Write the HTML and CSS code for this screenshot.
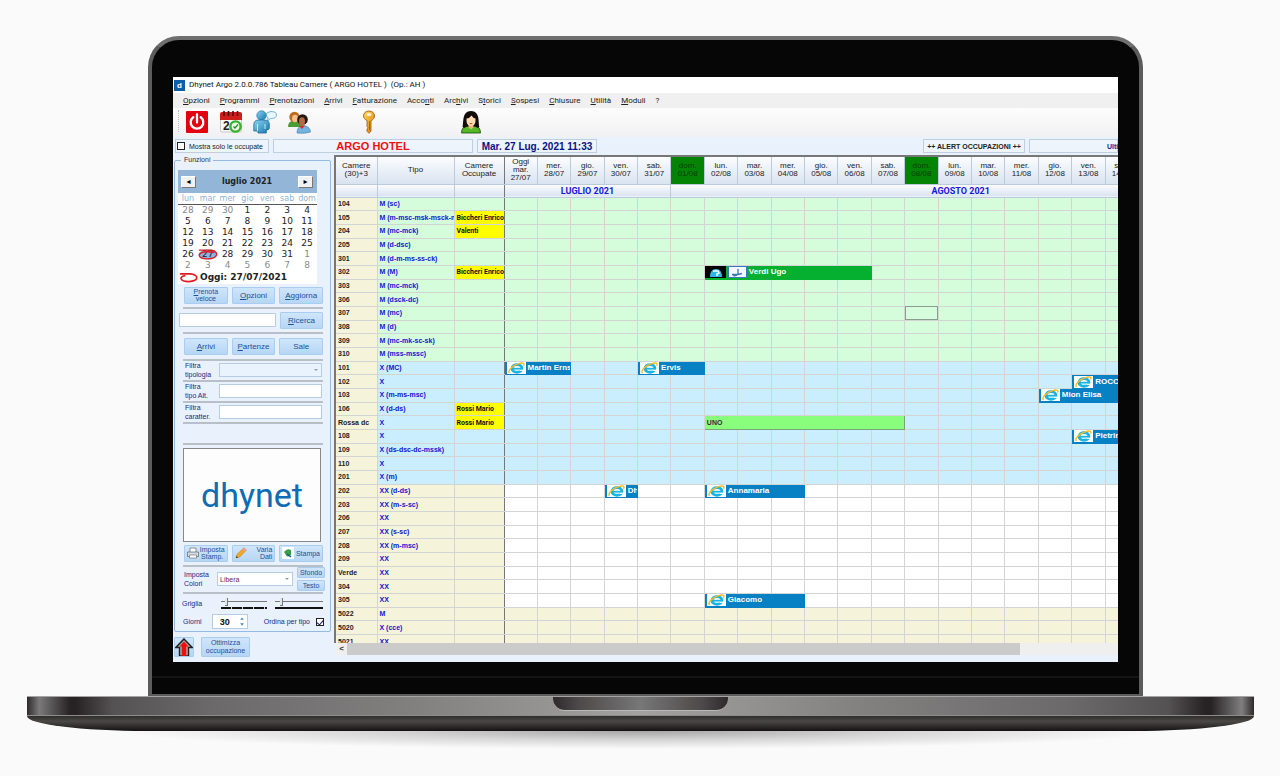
FILE: index.html
```html
<!DOCTYPE html>
<html lang="it">
<head>
<meta charset="utf-8">
<meta name="viewport" content="width=device-width, initial-scale=1">
<title>Dhynet Argo - Tableau Camere</title>
<link rel="stylesheet" href="styles.css">
</head>
<body>
<svg class="defs" aria-hidden="true">
  <defs>
    <linearGradient id="skyBody" x1="0" y1="0" x2="1" y2="1"><stop offset="0" stop-color="#8fd4f4"/><stop offset="1" stop-color="#1277ae"/></linearGradient>
    <linearGradient id="gold" x1="0" y1="0" x2="1" y2="1"><stop offset="0" stop-color="#ffd95a"/><stop offset="1" stop-color="#d9780e"/></linearGradient>
    <symbol id="ie" viewBox="0 0 19 12" preserveAspectRatio="none">
      <rect width="19" height="12" fill="#fff"/>
      <ellipse cx="10" cy="6.4" rx="4.9" ry="3.8" fill="none" stroke="#19b4e2" stroke-width="2.900"/>
      <path d="M6 6.7h9" stroke="#19b4e2" stroke-width="1.8"/>
      <path d="M12.5 8.3h4" stroke="#fff" stroke-width="1.3"/>
      <path d="M2.5 11C.5 9 5 3.500 11 1.800 15.500.4 18 1 16.500 3.600" fill="none" stroke="#f4bd26" stroke-width="1.400"/>
    </symbol>
  </defs>
</svg>
<div class="laptop">
  <div class="lid">
    <div class="screen">
      <header class="titlebar"><span class="app-mark">d</span><h1>Dhynet Argo 2.0.0.786 Tableau Camere ( ARGO HOTEL )&nbsp; (Op.: AH )</h1></header>
      <nav class="menu">
        <a href="#"><u>O</u>pzioni</a><a href="#"><u>P</u>rogrammi</a><a href="#"><u>P</u>renotazioni</a><a href="#"><u>A</u>rrivi</a><a href="#"><u>F</u>atturazione</a><a href="#">Acco<u>n</u>ti</a><a href="#">Arc<u>h</u>ivi</a><a href="#">S<u>t</u>orici</a><a href="#"><u>S</u>ospesi</a><a href="#"><u>C</u>hiusure</a><a href="#"><u>U</u>tilità</a><a href="#"><u>M</u>oduli</a><a href="#">?</a>
      </nav>
      <div class="toolbar">
        <button type="button" aria-label="Esci"><svg viewBox="0 0 24 24"><rect x="1" y="1" width="22" height="22" rx="1" fill="#e3000f"/><path d="M8.300 7.300a6.300 6.300 0 1 0 7.400 0M12 4.500v8" fill="none" stroke="#fff" stroke-width="2.300" stroke-linecap="round"/></svg></button>
        <button type="button" aria-label="Calendario"><svg viewBox="0 0 24 24"><rect x="1.500" y="3" width="21" height="19" rx="1.500" fill="#f7f7f7" stroke="#bbb" stroke-width=".8"/><path d="M1 10V4q0-2 2-2h18q2 0 2 2v6z" fill="#cf1d1d"/><path d="M5 1v5M9.500 1v5M14 1v5M18.500 1v5" stroke="#5a0d0d" stroke-width="1.600"/><text x="4" y="20" class="cal-num">2</text><circle cx="16.500" cy="16.500" r="6.300" fill="#35b32d"/><circle cx="16.500" cy="16.500" r="3.900" fill="#effbe9"/><path d="M14.500 16.500l1.500 1.500 3-3.500" fill="none" stroke="#2c8d29" stroke-width="1.300"/></svg></button>
        <button type="button" aria-label="Cliente"><svg viewBox="0 0 24 24"><path d="M13 5C13 1 23.500 0 23.500 4.800c0 3-3.500 4-6 3.700l-3 2.500.5-3.500q-2-1-2-2.500z" fill="#eaf8ff" stroke="#58a9cf" stroke-width=".9"/><circle cx="8.500" cy="5.500" r="4.700" fill="url(#skyBody)" stroke="#2177a3" stroke-width=".7"/><path d="M.8 21V15q0-5 5-5h5q6 0 5.500 5v3q0 2-3 2v3H5v-2z" fill="url(#skyBody)" stroke="#176a98" stroke-width=".8"/><path d="M4.500 14v7M12 14v5" stroke="#e8f8ff" stroke-width=".8"/></svg></button>
        <button type="button" aria-label="Ospiti"><svg viewBox="0 0 24 24"><path d="M1 17q0-5 4-6h6q4 1 4 6z" fill="#4c9c35"/><circle cx="7.500" cy="7" r="5.200" fill="#bd6b1c"/><ellipse cx="8" cy="8.500" rx="3" ry="3.700" fill="#f3bf8c"/><path d="M10 23q0-7 6-7.500Q23 16 23.500 22q-6 2-13.500 1z" fill="#74b3df" stroke="#3578a9" stroke-width=".6"/><circle cx="15.500" cy="9.500" r="5.300" fill="#221815"/><ellipse cx="15" cy="11.500" rx="3" ry="4.200" fill="#b66a42"/><path d="M12 16l3 3 3-3.500" fill="#d92d22"/></svg></button>
        <button type="button" class="tool-key" aria-label="Chiavi"><svg viewBox="0 0 24 24"><path d="M12 1c3.500 0 5.500 2.200 5.500 5 0 2.200-1.500 3.700-3.500 4.700V21l-2 2.300-2-2V19l1.200-1L10 16.500v-6C8 9.500 6.500 8.200 6.500 6c0-2.800 2-5 5.500-5z" fill="url(#gold)" stroke="#94580b" stroke-width=".8"/><ellipse cx="12" cy="4.500" rx="2.500" ry="1.600" fill="#fff5cf"/><path d="M12.500 11v9" stroke="#9e5410" stroke-width=".8"/></svg></button>
        <button type="button" class="tool-desk" aria-label="Reception"><svg viewBox="0 0 24 24"><path d="M2.500 23q0-6 5-7h9q5 1 5 7z" fill="#4fae24" stroke="#1b500d" stroke-width=".8"/><path d="M3.500 17C5 13 2.500 1 12 1s7 12 8.500 16q-3 2-8.500 2t-8.500-2z" fill="#110b0a"/><path d="M4 22q0-5 5-5.500l3 2 3-2q5 .5 5 5.500z" fill="#55b827"/><path d="M9.500 14h5v3.500l-2.500 2-2.500-2z" fill="#efb27f"/><path d="M7.500 8.500q3 0 5-3 1.500 2.500 4 3v2q0 5-4.500 5.500-4.500-.5-4.500-5.500z" fill="#ffd9b0"/><path d="M10.700 13.600h2.600" stroke="#c23b2b"/></svg></button>
      </div>
      <div class="infobar">
        <label class="info only-busy"><input type="checkbox" class="tick">Mostra solo le occupate</label>
        <strong class="info hotel">ARGO HOTEL</strong>
        <strong class="info today">Mar. 27 Lug. 2021 11:33</strong>
        <strong class="info alert">++ ALERT OCCUPAZIONI ++</strong>
        <strong class="info last">Ulti</strong>
      </div>
      <div class="workspace">
        <aside class="sidebar">
          <fieldset class="functions">
            <legend>Funzioni</legend>
            <div class="calendar">
              <div class="cal-head"><button type="button" aria-label="Mese precedente">◂</button><strong>luglio 2021</strong><button type="button" aria-label="Mese successivo">▸</button></div>
              <table class="cal-days">
                <thead><tr><th>lun</th><th>mar</th><th>mer</th><th>gio</th><th>ven</th><th>sab</th><th>dom</th></tr></thead>
                <tbody>
                  <tr><td class="off">28</td><td class="off">29</td><td class="off">30</td><td>1</td><td>2</td><td>3</td><td>4</td></tr>
                  <tr><td>5</td><td>6</td><td>7</td><td>8</td><td>9</td><td>10</td><td>11</td></tr>
                  <tr><td>12</td><td>13</td><td>14</td><td>15</td><td>16</td><td>17</td><td>18</td></tr>
                  <tr><td>19</td><td>20</td><td>21</td><td>22</td><td>23</td><td>24</td><td>25</td></tr>
                  <tr><td>26</td><td class="now">27<svg class="ring" viewBox="0 0 22 12"><path d="M1 1.200h14C24 3 22 10.500 11 10.800-1 11-1 4 7 3.200q6-.7 11 .8" fill="none" stroke="#e11b22" stroke-width="1.500"/></svg></td><td>28</td><td>29</td><td>30</td><td>31</td><td class="off">1</td></tr>
                  <tr><td class="off">2</td><td class="off">3</td><td class="off">4</td><td class="off">5</td><td class="off">6</td><td class="off">7</td><td class="off">8</td></tr>
                </tbody>
              </table>
              <p class="cal-today"><svg viewBox="0 0 22 12"><path d="M1 2h12C23 3.500 21 10 11 10.500 0 10.500 0 4.500 7 4" fill="none" stroke="#e11b22" stroke-width="1.800"/></svg>Oggi: 27/07/2021</p>
            </div>
            <div class="trio first"><button type="button" class="btn small"><u>P</u>renota<br>veloce</button><button type="button" class="btn"><u>O</u>pzioni</button><button type="button" class="btn"><u>A</u>ggiorna</button></div>
            <hr>
            <div class="search"><input type="text" class="box" aria-label="Testo da cercare"><button type="button" class="btn"><u>R</u>icerca</button></div>
            <hr>
            <div class="trio roomy"><button type="button" class="btn"><u>A</u>rrivi</button><button type="button" class="btn"><u>P</u>artenze</button><button type="button" class="btn">Sale</button></div>
            <hr>
            <div class="filter"><label for="f-tipo">Filtra<br>tipologia</label><span class="pick"><select id="f-tipo" class="box tint"><option></option></select></span></div>
            <hr>
            <div class="filter"><label for="f-alt">Filtra<br>tipo Alt.</label><input type="text" id="f-alt" class="box"></div>
            <hr>
            <div class="filter"><label for="f-car">Filtra<br>caratter.</label><input type="text" id="f-car" class="box"></div>
            <hr class="wide-gap">
            <hr>
            <div class="logo">dhynet</div>
            <div class="trio prints">
              <button type="button" class="btn small icon-btn"><svg viewBox="0 0 12 12"><path d="M3 5V1h6v4" fill="#fff" stroke="#777" stroke-width=".8"/><path d="M.5 5h11v4.500H.5z" fill="#d6dce4" stroke="#66717f" stroke-width=".8"/><path d="M2.500 8h7v3h-7z" fill="#fff" stroke="#777" stroke-width=".7"/></svg><span>Imposta<br>Stamp.</span></button>
              <button type="button" class="btn small icon-btn"><svg viewBox="0 0 12 12"><path d="M1 11l1-3.500L9 .8l2.300 2.300L4.500 10z" fill="#f7a823" stroke="#c07412" stroke-width=".6"/><path d="M9 .8l2.300 2.300-1.500 1.500-2.300-2.300z" fill="#eda0a0"/><path d="M1 11l.6-2L3 10.400z" fill="#333"/></svg><span class="end">Varia<br>Dati</span></button>
              <button type="button" class="btn small icon-btn"><svg viewBox="0 0 12 12"><path d="M0 0h12v12H0z" fill="#fff"/><path d="M2 5q3-4 7-2v5q-4 3-5 0z" fill="#36a04a"/><path d="M5 7l4 3" stroke="#1e5c83" stroke-width="1.500"/></svg><span>Stampa</span></button>
            </div>
            <hr>
            <div class="colors"><label for="colori">Imposta<br>Colori</label><span class="pick"><select id="colori" class="box"><option>Libera</option></select></span><div class="stack"><button type="button" class="btn small">Sfondo</button><button type="button" class="btn small">Testo</button></div></div>
            <hr>
            <div class="lines"><label for="g1">Griglia</label><span class="slide dashed"><input type="range" id="g1" min="0" max="10" value="1"></span><span class="slide"><input type="range" aria-label="Griglia orizzontale" min="0" max="10" value="1"></span></div>
            <div class="days"><label for="giorni">Giorni</label><span class="spin"><input type="text" inputmode="numeric" id="giorni" class="box" value="30"><svg viewBox="0 0 6 12"><path d="M1 4l2-2.500L5 4zM1 8l2 2.500L5 8z" fill="#4a86b5"/></svg></span><label class="order">Ordina per tipo<input type="checkbox" class="tick" checked></label></div>
          </fieldset>
          <div class="foot"><button type="button" class="btn up" aria-label="Torna su"><svg viewBox="0 0 20 20"><path d="M10 1l9 9.500h-4V20H5v-9.500H1z" fill="#aaa" stroke="#222" stroke-width="1.600"/><path d="M10 4l5 5.500h-2.500V20h-5V9.500H5z" fill="#f20d0d"/></svg></button><button type="button" class="btn small optimize">Ottimizza<br>occupazione</button></div>
        </aside>
        <main class="board">
          <div class="viewport">
            <table class="tableau">
              <colgroup id="cols"><col class="c-room"><col class="c-type"><col class="c-guest"></colgroup>
              <thead>
                <tr class="day-row" id="dayRow"><th>Camere<br>(30)+3</th><th>Tipo</th><th class="edge">Camere<br>Occupate</th></tr>
                <tr class="month-row"><th></th><th></th><th class="edge"></th><th colspan="5" class="month">LUGLIO 2021</th><th colspan="14" class="month">
                  <span class="month-late">AGOSTO 2021</span></th></tr>
              </thead>
              <tbody id="rooms"></tbody>
            </table>
          </div>
          <div class="scroll"><button type="button" aria-label="Scorri a sinistra">&lt;</button><span class="thumb"></span></div>
        </main>
      </div>
    </div>
  </div>
  <div class="base"><div class="notch"></div></div>
  <div class="under"></div>
  <div class="shadow"></div>
</div>
<script src="tableau.js"></script>
</body>
</html>
```
FILE: styles.css
```css
* { box-sizing: border-box; }
body { margin: 0; background: #fafafa; font: 8px/9px "Liberation Sans", Arial, sans-serif; color: #222; overflow: hidden; }
button, input, select { font: inherit; color: inherit; margin: 0; padding: 0; border-radius: 0; appearance: none; }
button { border: 0; background: none; }
p, h1, hr { margin: 0; }
svg { display: block; }
.defs { position: absolute; width: 0; height: 0; }

/* Laptop */
.laptop { padding: 36px 26px 0 27px; }
.lid { margin: 0 111px 0 121px; padding: 37px 21px 32px; border: 4px solid #5c5c5c; border-top-color: #6f6f6f; border-bottom-width: 2px; border-radius: 31px 31px 0 0; background: linear-gradient(#060606 0 636px, #141414 636px 638px, #060606 638px); }
.screen { background: #e8f1fc; overflow: hidden; }
.base { height: 20px; display: flex; justify-content: center; border-top: 1px solid #a5a5a3; border-bottom: 1px solid #8c8c8a; background: linear-gradient(90deg, #2c2a2b, #7b797a 1%, #272324 3.500%, #272324 4%, #555253 7%, #6b696a 15%, #828180 32%, #a3a2a0 50%, #828180 68%, #6b696a 85%, #555253 93%, #272324 96%, #272324 96.500%, #807e7f 99%, #2c2a2b); }
.notch { width: 175px; height: 14px; border-radius: 0 0 12px 12px; background: linear-gradient(90deg, #2e2a2b, #4e494a 15%, #777 50%, #4e494a 85%, #2e2a2b); border-bottom: 1px solid #b9b9b7; }
.under { height: 15px; border-radius: 0 0 120px 120px / 0 0 15px 15px; background: linear-gradient(#302e2d, #4a4846 35%, #2a2727 75%, #121011); }
.shadow { height: 18px; margin: 0 90px; background: radial-gradient(50% 100% at 50% 0, #a6a6a6, #d6d6d6 50%, #fafafa); }

/* Window chrome */
.titlebar { display: flex; align-items: center; gap: 4px; height: 16px; padding-left: 1px; background: #fff; }
.titlebar h1 { font: 8px/14px Roboto, sans-serif; color: #111; white-space: nowrap; }
.app-mark { width: 11px; height: 11px; background: #0c5ea8; color: #fff; font-weight: bold; text-align: center; line-height: 11px; }
.menu { display: flex; gap: 10px; height: 15px; padding-left: 10px; align-items: center; background: #f0f0f0; }
.menu a { color: #222; text-decoration: none; font: 8px/9px Roboto, sans-serif; }
.toolbar { display: flex; gap: 10px; height: 29px; padding: 2px 0 3px 12px; background: linear-gradient(#fdfdfd, #f1f1f3); }
.toolbar::before { content: ""; position: absolute; width: 1px; height: 22px; margin-left: -7px; border-left: 1px dotted #bbb; }
.toolbar button { width: 24px; height: 24px; }
.toolbar svg { width: 24px; height: 24px; }
.tool-key { margin-left: 36px; }
.tool-desk { margin-left: 68px; }
.cal-num { font: bold 12px "Liberation Sans", sans-serif; fill: #222; }
.infobar { display: flex; gap: 4px; height: 18px; padding: 2px 0 2px 2px; overflow: hidden; white-space: nowrap; }
.info { display: flex; align-items: center; justify-content: center; flex: none; border: 1px solid #bfcfde; background: #edf4fc; }
.only-busy { width: 94px; gap: 4px; font-size: 7px; justify-content: flex-start; padding-left: 1px; }
.hotel { width: 200px; color: #f01010; font-size: 11px; }
.today { width: 120px; color: #0c1085; font-size: 10px; }
.alert { width: 102px; margin-left: auto; font-size: 7px; }
.last { width: 89px; justify-content: flex-start; padding-left: 77px; color: #22229a; font-size: 7px; }
.tick { display: grid; place-items: center; width: 8px; height: 8px; border: 1px solid #222; background: #fff; }
.tick:checked::before { content: ""; width: 3px; height: 5px; border: solid #1c1c60; border-width: 0 1px 1px 0; rotate: 40deg; }
.workspace { display: flex; align-items: stretch; }

/* Sidebar */
.sidebar { width: 161px; flex: none; padding: 1px 3px 5px 1px; color: #232b80; font-size: 7px; line-height: 9px; }
.functions { margin: 0; min-width: 0; padding: 6px 3px 0; border: 1px solid #94bbdf; border-radius: 2px; }
.functions legend { margin-left: 3px; padding: 0 3px; line-height: 8px; color: #333; }
.functions hr { height: 2px; margin: 0 4px 0 5px; border: 0; background: #b9bfc7; }
.functions hr.wide-gap { margin-bottom: 19px; }
.calendar { margin-right: 10px; background: #fff; color: #222; font-family: "DejaVu Sans", sans-serif; }
.cal-head { display: flex; align-items: center; justify-content: space-between; height: 23px; padding: 0 4px 0 3px; background: #93b5d7; font-size: 8px; }
.cal-head button { width: 15px; height: 12px; background: #f1f1f1; border: 1px solid #fff; border-right-color: #777; border-bottom-color: #777; line-height: 9px; color: #000; }
.cal-days { width: 100%; table-layout: fixed; border-collapse: collapse; font-size: 9px; text-align: center; }
.cal-days th { padding: 2px 0 0; height: 11px; line-height: 8px; font-size: 8px; font-weight: normal; color: #92b2d0; border-bottom: 1px solid #555; }
.cal-days td { padding: 0; height: 11px; line-height: 11px; }
.cal-days .off { color: #8a8a8a; }
.now { position: relative; background: radial-gradient(closest-side, #8db4e4 80%, transparent); }
.ring { position: absolute; inset: 0; width: 100%; height: 11px; }
.cal-today { display: flex; align-items: center; gap: 1px; height: 13px; padding-left: 1px; font-size: 9px; font-weight: bold; white-space: nowrap; }
.cal-today svg { width: 20px; height: 11px; }
.btn { height: 17px; background: linear-gradient(#cfe5fb, #b6d6f4); border: 1px solid #a9cdee; border-radius: 1px; color: #1c4f9c; font-size: 8px; line-height: 9px; white-space: nowrap; }
.btn.small { font-size: 7px; line-height: 7px; }
.trio { display: grid; grid-template-columns: repeat(3, minmax(0, 1fr)); gap: 4px; margin: 3px 4px 3px 6px; }
.trio.roomy { margin-top: 4px; margin-bottom: 4px; }
.icon-btn { display: flex; align-items: center; justify-content: space-between; padding: 0 2px; }
.icon-btn svg { width: 12px; height: 12px; flex: none; }
.icon-btn .end { text-align: right; }
.box { display: block; width: 100%; min-width: 0; height: 14px; padding: 0 2px; border: 1px solid #b4cde4; background: #fff; color: #6b2460; }
.box.tint { background: #e9f3fd; }
.search { display: flex; align-items: center; gap: 4px; margin: 3px 4px 3px 1px; }
.search .btn { width: 43px; flex: none; }
.filter { display: grid; grid-template-columns: 34px 1fr; align-items: center; height: 19px; margin: 0 5px 0 7px; line-height: 9px; }
.pick { position: relative; display: block; }
.pick::after { content: ""; position: absolute; right: 4px; top: 6px; border: 2px solid transparent; border-top-color: #8e9eae; pointer-events: none; }
.logo { display: flex; align-items: center; justify-content: center; height: 94px; margin: 3px 6px 0 5px; border: 1px solid #888; background: #fdfdfd; color: #0f6cb3; font: 34px/1 Roboto, sans-serif; }
.colors { display: grid; grid-template-columns: 33px 1fr 28px; align-items: center; height: 25px; margin: 0 2px 0 6px; }
.colors .pick { margin-right: 4px; }
.stack { display: grid; gap: 2px; }
.stack .btn { height: 11px; }
.lines { display: grid; grid-template-columns: 31px 46px 48px; column-gap: 8px; height: 19px; margin-left: 4px; align-items: center; }
.slide { display: grid; gap: 1px; }
.slide input { width: 100%; height: 9px; background: linear-gradient(#777, #777) center / 100% 1px no-repeat; }
.slide input::-webkit-slider-thumb { appearance: none; width: 3px; height: 8px; background: #dfe7ef; border: 1px solid #777; border-width: 0 1px 1px 0; }
.slide::after { content: ""; height: 2px; background: #111; }
.slide.dashed::after { background: repeating-linear-gradient(90deg, #111 0 10px, #cdd 10px 11px); }
.days { display: flex; align-items: center; height: 18px; margin: 0 3px 0 5px; }
.spin { position: relative; width: 36px; margin-left: 10px; }
.spin input { height: 15px; padding-left: 7px; color: #111; font-size: 9px; font-weight: bold; }
.spin svg { position: absolute; right: 3px; top: 2px; width: 6px; height: 11px; }
.order { display: flex; align-items: center; gap: 6px; margin-left: auto; white-space: nowrap; }
.foot { display: flex; gap: 7px; margin-top: 5px; }
.foot .btn { height: 20px; }
.up { width: 20px; }
.up svg { width: 18px; height: 18px; }
.optimize { width: 49px; }
.foot .optimize { line-height: 8px; }

/* Room tableau */
.board { flex: 1; min-width: 0; }
.viewport { height: 488px; overflow: hidden; border-top: 2px solid #777; border-left: 2px solid #777; background: #fff; }
.tableau { width: calc(100% + 21px); height: 492px; table-layout: fixed; border-collapse: collapse; }
.c-room { width: 41px; }
.c-type { width: 77px; }
.c-guest { width: 50px; }
.tableau th { padding: 0; border: 1px solid #bccbdc; border-width: 0 1px 1px 0; background: linear-gradient(#fbfcfe, #d9e3f0); font-weight: normal; line-height: 8px; }
.tableau .day-row th { height: 27px; }
.tableau .month-row th { height: 13px; }
.tableau .month-row .month { color: #1717dd; font: bold 9px/10px Roboto, sans-serif; }
.month-late { padding-left: 112px; }
.tableau .sunday { background: #058305; color: #073f07; }
.tableau td { height: 13px; padding: 0 0 0 2px; border: 1px solid #d3d5d5; border-width: 0 1px 1px 0; overflow: hidden; white-space: nowrap; font-size: 7px; font-weight: bold; line-height: 10px; color: #1414d2; }
.tableau td:first-child { color: #1b1b1b; background: #f5f3d9; }
.tableau .edge { border-right: 1px solid #777; }
.tableau .taken { color: #111; background: #ff0; font-family: Roboto, sans-serif; }
.green { background: #d5fddc; }
.blue { background: #cbeeff; }
.free .type, .free .edge, .extra { background: #f5f3d9; }
.tableau td.stay { padding: 0 0 0 2px; background: #0781c4; border-color: #0781c4; color: #fff; font-size: 8px; }
.tableau td.stay.arrived { background: #05b031; border-color: #05b031; padding-left: 0; }
.tableau td.stay.option { background: #89fd7c; border-color: #77a577; color: #4d1747; font-size: 7px; }
.tableau td.picked { outline: 1px solid #8c9c8e; outline-offset: -1px; }
.tag { display: flex; align-items: center; gap: 2px; height: 12px; }
.tag svg { width: 19px; height: 12px; flex: none; }
.arrived .tag svg:first-child { width: 21px; }
.scroll { display: flex; height: 12px; margin-left: 2px; background: #efefef; }
.scroll button { width: 11px; line-height: 10px; color: #333; font-weight: bold; }
.thumb { width: 86%; background: #cbcbcb; }
```
FILE: tableau.js
```js
const weekdays = ["mar.", "mer.", "gio.", "ven.", "sab.", "dom.", "lun."];
const DAYS = 19;

// room, type, guest, stays as [first day, length, label, kind]
const rooms = [
  ["104", "M (sc)"],
  ["105", "M (m-msc-msk-msck-mc)", "Biccheri Enrico"],
  ["204", "M (mc-mck)", "Valenti"],
  ["205", "M (d-dsc)"],
  ["301", "M (d-m-ms-ss-ck)"],
  ["302", "M (M)", "Biccheri Enrico", [6, 5, "Verdi Ugo", "arrived"]],
  ["303", "M (mc-mck)"],
  ["306", "M (dsck-dc)"],
  ["307", "M (mc)"],
  ["308", "M (d)"],
  ["309", "M (mc-mk-sc-sk)"],
  ["310", "M (mss-mssc)"],
  ["101", "X (MC)", "", [0, 2, "Martin Erns"], [4, 2, "Ervis"]],
  ["102", "X", "", [17, 2, "ROCCO"]],
  ["103", "X (m-ms-msc)", "", [16, 3, "Mion Elisa"]],
  ["106", "X (d-ds)", "Rossi Mario"],
  ["Rossa dc", "X", "Rossi Mario", [6, 6, "UNO", "option"]],
  ["108", "X", "", [17, 2, "Pietrini"]],
  ["109", "X (ds-dsc-dc-mssk)"],
  ["110", "X"],
  ["201", "X (m)"],
  ["202", "XX (d-ds)", "", [3, 1, "Dhynet"], [6, 3, "Annamaria"]],
  ["203", "XX (m-s-sc)"],
  ["206", "XX"],
  ["207", "XX (s-sc)"],
  ["208", "XX (m-msc)"],
  ["209", "XX"],
  ["Verde", "XX"],
  ["304", "XX"],
  ["305", "XX", "", [6, 3, "Giacomo"]],
  ["5022", "M"],
  ["5020", "X (cce)"],
  ["5021", "XX"]
];

const group = i => i < 12 ? "green" : i < 21 ? "blue" : i < 30 ? "free" : "extra";
const web = '<svg aria-hidden="true"><use href="#ie"/></svg>';
const arrivedIcons = '<svg viewBox="0 0 21 12" aria-hidden="true"><path d="M0 0h21v12H0z" fill="#000"/><path d="M5 11q0-8 6-8t6 8z" fill="#2fb6e8"/><path d="M8 5h5l1 2-2 1v2" fill="none" stroke="#fff" stroke-width="1.400"/></svg>' +
  '<svg viewBox="0 0 19 12" aria-hidden="true"><path d="M.5.5h18v11H.5z" fill="#f4f9ff" stroke="#3a78bd"/><path d="M4 8.500h6l4-1M10 3v5M10 8q-3 3-5 1" fill="none" stroke="#3f77b5" stroke-width="1.300"/></svg>';

let dayCells = "";
for (let d = 0; d < DAYS; d++) {
  const n = 27 + d;
  const date = n <= 31 ? `${n}/07` : `${String(n - 31).padStart(2, "0")}/08`;
  const name = weekdays[d % 7];
  dayCells += `<th class="${name === "dom." ? "sunday" : ""}">${d === 0 ? "Oggi<br>" : ""}${name}<br>${date}</th>`;
}
document.getElementById("dayRow").insertAdjacentHTML("beforeend", dayCells);
document.getElementById("cols").insertAdjacentHTML("beforeend", "<col>".repeat(DAYS));

document.getElementById("rooms").innerHTML = rooms.map(([room, type, guest = "", ...stays], i) => {
  let cells = "";
  for (let d = 0; d < DAYS;) {
    const stay = stays.find(s => s[0] === d);
    if (stay) {
      const [, span, label, kind = "web"] = stay;
      const icon = kind === "web" ? web : kind === "arrived" ? arrivedIcons : "";
      cells += `<td class="stay ${kind}" colspan="${span}"><div class="tag">${icon}${label}</div></td>`;
      d += span;
    } else {
      cells += room === "307" && d === 12 ? '<td class="picked"></td>' : "<td></td>";
      d++;
    }
  }
  return `<tr class="${group(i)}"><td>${room}</td><td class="type">${type}</td><td class="edge ${guest ? "taken" : ""}">${guest}</td>${cells}</tr>`;
}).join("");
```
